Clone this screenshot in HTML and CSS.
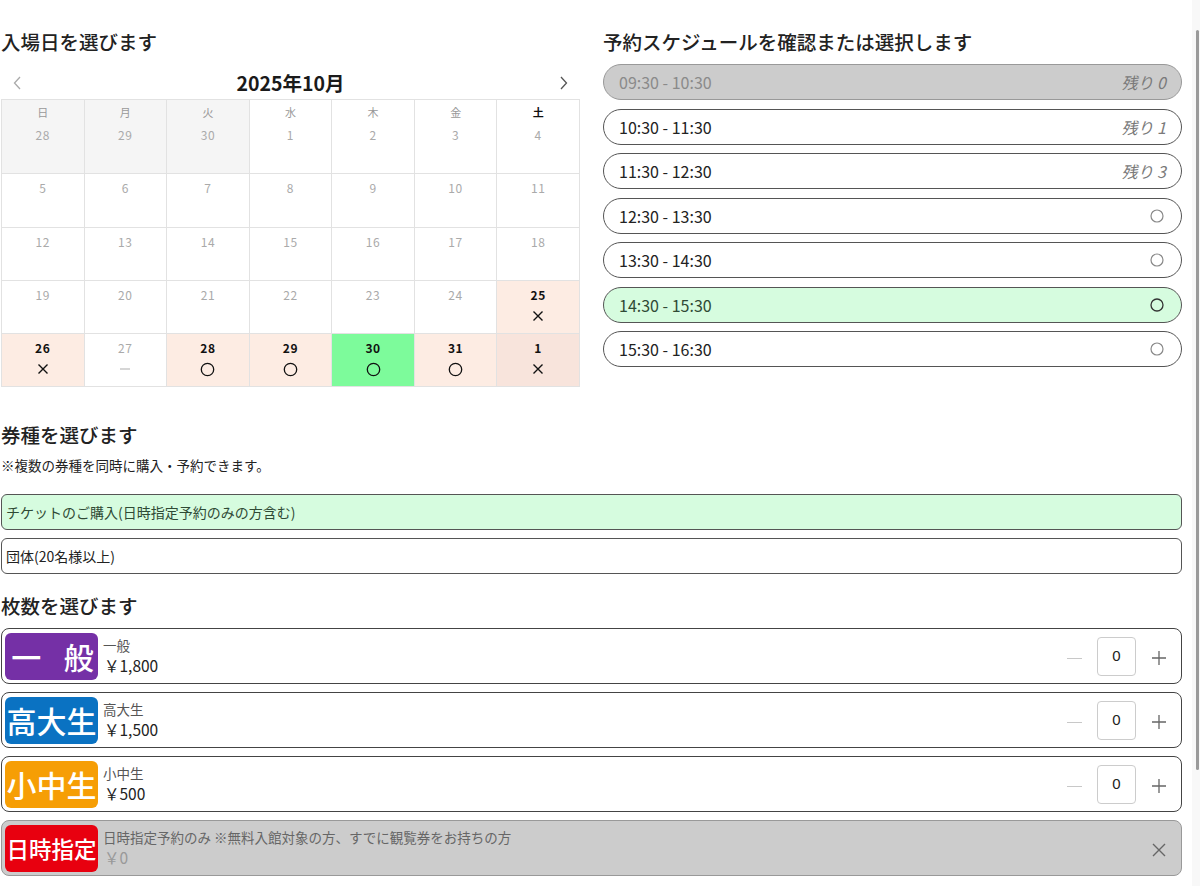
FILE: index.html
```html
<!DOCTYPE html>
<html lang="ja">
<head>
<meta charset="utf-8">
<title>予約</title>
<link rel="stylesheet" href="styles.css">
</head>
<body>
<div class="page">
  <div class="top">
    <section class="col">
      <h2 class="title">入場日を選びます</h2>
      <div class="cal-nav">
        <span class="chev"><svg width="8" height="14" viewBox="0 0 8 14"><polyline points="7,1 1.5,7 7,13" fill="none" stroke="#aaa" stroke-width="1.3"/></svg></span>
        <span class="cal-month">2025年10月</span>
        <span class="chev"><svg width="8" height="14" viewBox="0 0 8 14"><polyline points="1,1 6.5,7 1,13" fill="none" stroke="#555" stroke-width="1.3"/></svg></span>
      </div>
      <div class="cal">
        <div class="cell first other"><span class="wd">日</span><span class="d">28</span></div>
        <div class="cell first other"><span class="wd">月</span><span class="d">29</span></div>
        <div class="cell first other"><span class="wd">火</span><span class="d">30</span></div>
        <div class="cell first"><span class="wd">水</span><span class="d">1</span></div>
        <div class="cell first"><span class="wd">木</span><span class="d">2</span></div>
        <div class="cell first"><span class="wd">金</span><span class="d">3</span></div>
        <div class="cell first"><span class="wd sat">土</span><span class="d">4</span></div>

        <div class="cell"><span class="d">5</span></div>
        <div class="cell"><span class="d">6</span></div>
        <div class="cell"><span class="d">7</span></div>
        <div class="cell"><span class="d">8</span></div>
        <div class="cell"><span class="d">9</span></div>
        <div class="cell"><span class="d">10</span></div>
        <div class="cell"><span class="d">11</span></div>

        <div class="cell"><span class="d">12</span></div>
        <div class="cell"><span class="d">13</span></div>
        <div class="cell"><span class="d">14</span></div>
        <div class="cell"><span class="d">15</span></div>
        <div class="cell"><span class="d">16</span></div>
        <div class="cell"><span class="d">17</span></div>
        <div class="cell"><span class="d">18</span></div>

        <div class="cell"><span class="d">19</span></div>
        <div class="cell"><span class="d">20</span></div>
        <div class="cell"><span class="d">21</span></div>
        <div class="cell"><span class="d">22</span></div>
        <div class="cell"><span class="d">23</span></div>
        <div class="cell"><span class="d">24</span></div>
        <div class="cell open"><span class="d">25</span><span class="mk"><svg width="12" height="12" viewBox="0 0 12 12"><path d="M1.5 1.5 L10.5 10.5 M10.5 1.5 L1.5 10.5" stroke="#111" stroke-width="1.4"/></svg></span></div>

        <div class="cell open"><span class="d">26</span><span class="mk"><svg width="12" height="12" viewBox="0 0 12 12"><path d="M1.5 1.5 L10.5 10.5 M10.5 1.5 L1.5 10.5" stroke="#111" stroke-width="1.4"/></svg></span></div>
        <div class="cell"><span class="d">27</span><span class="mk"><svg width="12" height="12" viewBox="0 0 12 12"><path d="M1 6 H11" stroke="#bbb" stroke-width="1.2"/></svg></span></div>
        <div class="cell open"><span class="d">28</span><span class="mk"><svg width="15" height="15" viewBox="0 0 15 15"><circle cx="7.5" cy="7.5" r="6.2" fill="none" stroke="#111" stroke-width="1.3"/></svg></span></div>
        <div class="cell open"><span class="d">29</span><span class="mk"><svg width="15" height="15" viewBox="0 0 15 15"><circle cx="7.5" cy="7.5" r="6.2" fill="none" stroke="#111" stroke-width="1.3"/></svg></span></div>
        <div class="cell open sel"><span class="d">30</span><span class="mk"><svg width="15" height="15" viewBox="0 0 15 15"><circle cx="7.5" cy="7.5" r="6.2" fill="none" stroke="#111" stroke-width="1.3"/></svg></span></div>
        <div class="cell open"><span class="d">31</span><span class="mk"><svg width="15" height="15" viewBox="0 0 15 15"><circle cx="7.5" cy="7.5" r="6.2" fill="none" stroke="#111" stroke-width="1.3"/></svg></span></div>
        <div class="cell open next"><span class="d">1</span><span class="mk"><svg width="12" height="12" viewBox="0 0 12 12"><path d="M1.5 1.5 L10.5 10.5 M10.5 1.5 L1.5 10.5" stroke="#111" stroke-width="1.4"/></svg></span></div>
      </div>
    </section>

    <section class="col">
      <h2 class="title">予約スケジュールを確認または選択します</h2>
      <ul class="slots">
        <li class="slot off"><span>09:30 - 10:30</span><span class="left">残り 0</span></li>
        <li class="slot"><span>10:30 - 11:30</span><span class="left">残り 1</span></li>
        <li class="slot"><span>11:30 - 12:30</span><span class="left">残り 3</span></li>
        <li class="slot"><span>12:30 - 13:30</span><span class="ok"><svg width="14" height="14" viewBox="0 0 14 14"><circle cx="7" cy="7" r="6" fill="none" stroke="#888" stroke-width="1.2"/></svg></span></li>
        <li class="slot"><span>13:30 - 14:30</span><span class="ok"><svg width="14" height="14" viewBox="0 0 14 14"><circle cx="7" cy="7" r="6" fill="none" stroke="#888" stroke-width="1.2"/></svg></span></li>
        <li class="slot on"><span>14:30 - 15:30</span><span class="ok"><svg width="14" height="14" viewBox="0 0 14 14"><circle cx="7" cy="7" r="6" fill="none" stroke="#333" stroke-width="1.3"/></svg></span></li>
        <li class="slot"><span>15:30 - 16:30</span><span class="ok"><svg width="14" height="14" viewBox="0 0 14 14"><circle cx="7" cy="7" r="6" fill="none" stroke="#888" stroke-width="1.2"/></svg></span></li>
      </ul>
    </section>
  </div>

  <section class="sec-type">
    <h2 class="title">券種を選びます</h2>
    <p class="note">※複数の券種を同時に購入・予約できます。</p>
    <div class="type-btn on">チケットのご購入(日時指定予約のみの方含む)</div>
    <div class="type-btn">団体(20名様以上)</div>
  </section>

  <section class="sec-qty">
    <h2 class="title">枚数を選びます</h2>
    <div class="qrow">
      <div class="badge purple wide">一 般</div>
      <div class="info"><span class="name">一般</span><span class="price">￥1,800</span></div>
      <div class="ctrl">
        <span class="minus"></span>
        <span class="qty">0</span>
        <span class="plus"><svg width="16" height="16" viewBox="0 0 16 16"><path d="M8 1 V15 M1 8 H15" stroke="#666" stroke-width="1.3"/></svg></span>
      </div>
    </div>
    <div class="qrow">
      <div class="badge blue">高大生</div>
      <div class="info"><span class="name">高大生</span><span class="price">￥1,500</span></div>
      <div class="ctrl">
        <span class="minus"></span>
        <span class="qty">0</span>
        <span class="plus"><svg width="16" height="16" viewBox="0 0 16 16"><path d="M8 1 V15 M1 8 H15" stroke="#666" stroke-width="1.3"/></svg></span>
      </div>
    </div>
    <div class="qrow">
      <div class="badge orange">小中生</div>
      <div class="info"><span class="name">小中生</span><span class="price">￥500</span></div>
      <div class="ctrl">
        <span class="minus"></span>
        <span class="qty">0</span>
        <span class="plus"><svg width="16" height="16" viewBox="0 0 16 16"><path d="M8 1 V15 M1 8 H15" stroke="#666" stroke-width="1.3"/></svg></span>
      </div>
    </div>
    <div class="qrow off">
      <div class="badge red small">日時指定</div>
      <div class="info"><span class="name">日時指定予約のみ ※無料入館対象の方、すでに観覧券をお持ちの方</span><span class="price">￥0</span></div>
      <div class="ctrl">
        <span class="close"><svg width="16" height="16" viewBox="0 0 16 16"><path d="M2 2 L14 14 M14 2 L2 14" stroke="#666" stroke-width="1.4"/></svg></span>
      </div>
    </div>
  </section>
</div>
<div class="scrollbar"><div class="thumb"></div></div>
</body>
</html>
```

FILE: styles.css
```css
* { box-sizing: border-box; }
html, body {
  margin: 0;
  padding: 0;
  background: #fff;
  overflow: hidden;
}
body {
  font-family: "Noto Sans CJK JP", "Noto Sans", sans-serif;
  color: #222;
}
.page {
  padding: 27px 18px 0 1px;
}
.title {
  margin: 0;
  font-size: 19.5px;
  line-height: 29px;
  font-weight: 500;
  color: #222;
}
.top {
  display: grid;
  grid-template-columns: 579px 1fr;
  column-gap: 23px;
}

/* calendar */
.cal-nav {
  height: 43px;
  padding: 10px 12px 0 12px;
  display: flex;
  align-items: center;
  justify-content: space-between;
}
.cal-nav .chev { display: flex; align-items: center; height: 33px; }
.cal-month {
  font-size: 19.5px;
  font-weight: 700;
  line-height: 33px;
  color: #1a1a1a;
}
.cal {
  display: grid;
  grid-template-columns: repeat(7, 1fr);
  grid-template-rows: 74px 54px 53px 53px 53px;
  border-top: 1px solid #e2e2e2;
  border-left: 1px solid #e2e2e2;
}
.cell {
  border-right: 1px solid #e2e2e2;
  border-bottom: 1px solid #e2e2e2;
  display: flex;
  flex-direction: column;
  align-items: center;
  padding-top: 4px;
  background: #fff;
}
.cell.first { padding-top: 0; }
.cell.other { background: #f5f5f5; }
.cell.open { background: #fdece3; }
.cell.next { background: #f8e4dc; }
.cell.sel { background: #7dfb9b; }
.wd {
  font-size: 11px;
  line-height: 24px;
  color: #999;
}
.wd.sat { color: #111; font-weight: 700; }
.d {
  font-size: 12px;
  line-height: 20px;
  letter-spacing: 0.6px;
  color: #aaa;
}
.cell.first .d { margin-top: 1px; }
.cell.open .d {
  color: #111;
  font-weight: 700;
}
.mk {
  height: 22px;
  display: flex;
  align-items: center;
  justify-content: center;
}
.mk svg { display: block; }

/* time slots */
.slots {
  list-style: none;
  margin: 8px 0 0 0;
  padding: 0;
}
.slot {
  height: 36px;
  margin-bottom: 8.5px;
  border: 1px solid #555;
  border-radius: 18px;
  display: flex;
  align-items: center;
  justify-content: space-between;
  padding: 0 15px;
  font-size: 16px;
  color: #222;
  background: #fff;
}
.slot.off {
  background: #cccccc;
  border-color: #999;
  color: #8a8a8a;
}
.slot.on {
  background: #d6fcdf;
  color: #2f4a35;
}
.slot .left {
  font-style: italic;
  color: #7a7a7a;
}
.slot .ok { display: flex; margin-right: 2px; }

/* ticket types */
.sec-type { margin-top: 33px; }
.note {
  margin: 6px 0 0 0;
  font-size: 13.5px;
  line-height: 20px;
  color: #222;
}
.type-btn {
  height: 36px;
  border: 1px solid #555;
  border-radius: 6px;
  padding-left: 4px;
  display: flex;
  align-items: center;
  font-size: 14px;
  color: #222;
  background: #fff;
}
.note + .type-btn { margin-top: 19px; }
.type-btn + .type-btn { margin-top: 8px; }
.type-btn.on {
  background: #d6fcdf;
  color: #2f4a35;
}

/* quantities */
.sec-qty { margin-top: 17px; }
.sec-qty .title { margin-bottom: 8px; }
.qrow {
  height: 56px;
  margin-bottom: 8px;
  border: 1px solid #444;
  border-radius: 8px;
  display: flex;
  align-items: center;
  padding: 0 14px 0 3px;
  background: #fff;
}
.qrow.off {
  background: #cccccc;
  border-color: #999;
}
.badge {
  width: 93px;
  height: 47px;
  border-radius: 6px;
  color: #fff;
  font-size: 30px;
  font-weight: 500;
  line-height: 47px;
  text-align: center;
  flex: none;
  margin-top: 1px;
  white-space: nowrap;
  overflow: hidden;
}
.badge.wide { word-spacing: 16px; padding-left: 2px; }
.badge.small { font-size: 22.5px; }
.badge.purple { background: #7530a6; }
.badge.blue { background: #0a72c2; }
.badge.orange { background: #f69e05; }
.badge.red { background: #e8000f; }
.info {
  display: flex;
  flex-direction: column;
  margin-left: 5px;
  flex: 1;
}
.name {
  font-size: 13.5px;
  line-height: 18px;
  color: #555;
}
.price {
  font-size: 15.5px;
  line-height: 22px;
  color: #222;
  padding-left: 1px;
}
.qrow.off .name { color: #666; }
.qrow.off .price { color: #999; }
.ctrl {
  display: flex;
  align-items: center;
}
.minus {
  width: 15px;
  height: 1px;
  background: #c8c8c8;
  margin-top: 4px;
}
.qty {
  width: 39px;
  height: 39px;
  margin: 0 15px 0 15px;
  border: 1px solid #ccc;
  border-radius: 4px;
  font-size: 15px;
  line-height: 36px;
  text-align: center;
  color: #222;
  font-family: "Liberation Sans", "Noto Sans", sans-serif;
}
.plus, .close { display: flex; margin-top: 3px; }

/* scrollbar */
.scrollbar {
  position: fixed;
  top: 0;
  right: 0;
  bottom: 0;
  width: 8px;
  background: #f8f8f8;
}
.thumb {
  position: absolute;
  top: 30px;
  right: 1px;
  width: 3px;
  height: 740px;
  border-radius: 2px;
  background: #9a9a9a;
}
```
